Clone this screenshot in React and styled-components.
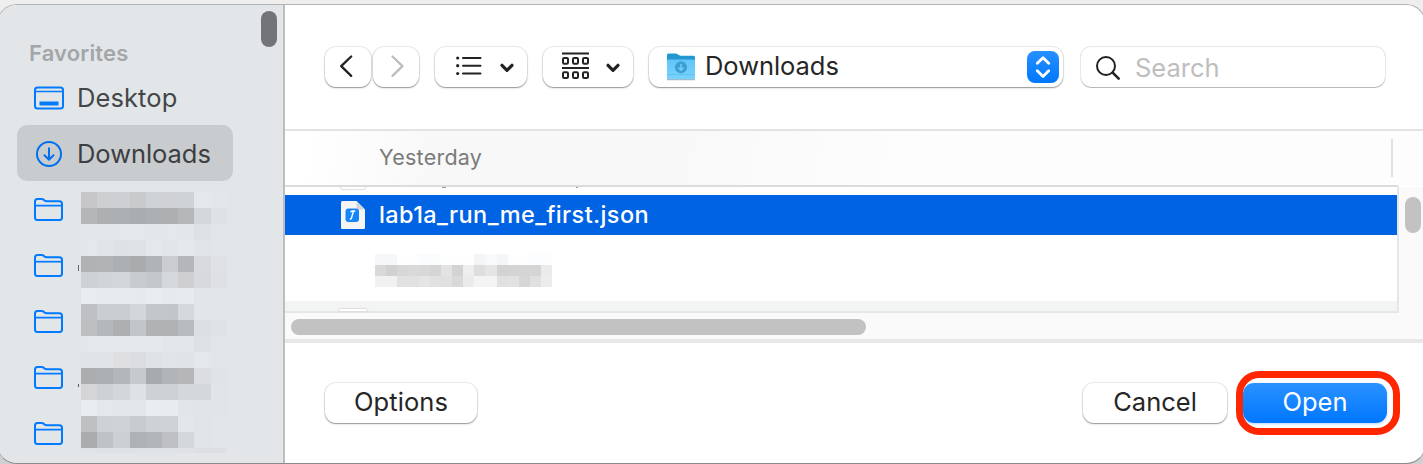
import React from "react";
import styled, { createGlobalStyle } from "styled-components";

const GlobalStyle = createGlobalStyle`
  *, *::before, *::after { box-sizing: border-box; }
  body {
    margin: 0;
    overflow: hidden;
    background: #ececec;
    font-family: Inter, "Liberation Sans", sans-serif;
    color: #262626;
  }
`;

const Desktop = styled.div`
  height: 464px;
  padding-top: 4px;
  overflow: hidden;
  background: linear-gradient(#eeeeee 0, #eeeeee 50%, #d0d0d0 50%);
`;

const Window = styled.div`
  display: flex;
  height: 460px;
  margin: 0 -3px;
  border: 1px solid #b4b4b4;
  border-bottom-color: #8c8c8c;
  border-radius: 20px;
  overflow: hidden;
  background: #fff;
`;

const Sidebar = styled.aside`
  display: flex;
  flex: none;
  width: 287px;
  padding-left: 2px;
  background: #e2e6e9;
  border-right: 2px solid #bcbdbf;
`;

const Places = styled.nav`
  flex: none;
  width: 257px;
  padding: 32px 20px 0 17px;
`;

const SectionTitle = styled.h2`
  margin: 0;
  padding-left: 12px;
  font-size: 22px;
  font-weight: 600;
  line-height: 32px;
  letter-spacing: 0.15px;
  color: #a3a6a9;
`;

const Place = styled.div`
  display: flex;
  align-items: center;
  width: 216px;
  height: 56px;
  padding: 2px 0 0 16px;
  border-radius: 10px;
  gap: 12px;
  background: ${(p) => (p.$selected ? "#c9cccf" : "transparent")};
`;

const Label = styled.span`
  font-size: ${(p) => p.$size || 25.5}px;
  line-height: 32px;
  white-space: nowrap;
  letter-spacing: ${(p) => p.$track || 0}px;
  color: ${(p) => p.$color || "#262626"};
  font-weight: ${(p) => p.$weight || 400};
`;

const Redacted = styled.div`
  display: flex;
  padding-left: 16px;
  gap: 14px;
`;

const FolderColumn = styled.div`
  display: grid;
  grid-auto-rows: 56px;
  align-items: center;
  width: 48px;
  height: 280px;
  padding-top: 1px;
`;

const RedactedPixels = styled.div`
  padding: 11px 0 0 3px;
  margin-left: -17px;
  background: linear-gradient(#66686a, #66686a) 0 84px / 1px 6px no-repeat,
    linear-gradient(#55575a, #55575a) 0 203px / 1px 3px no-repeat;
`;

const Mosaic = styled.div`
  flex: none;
  display: grid;
  grid-template-columns: repeat(${(p) => p.$cols}, ${(p) => p.$cell}px);
  grid-template-rows: ${(p) => p.$rows};
  align-content: start;
`;

const Cell = styled.i`
  background: ${(p) => p.$color};
`;

const SidebarThumb = styled.div`
  width: 16px;
  height: 36px;
  margin: 6px 0 0 4px;
  border-radius: 8px;
  background: #737477;
`;

const Main = styled.main`
  display: flex;
  flex-direction: column;
  flex: 1;
  min-width: 0;
  padding-right: 2px;
`;

const Toolbar = styled.header`
  display: flex;
  height: 124px;
  flex: none;
  padding: 42px 0 0 40px;
`;

const Control = styled.div`
  display: flex;
  align-items: center;
  flex: none;
  width: ${(p) => p.$width}px;
  height: 40px;
  margin-right: ${(p) => p.$gap || 0}px;
  border-radius: 11px;
  background: #fff;
  box-shadow: 0 0 0 1px rgba(0, 0, 0, 0.07), 0 1px 1px rgba(0, 0, 0, 0.28),
    0 1px 3px rgba(0, 0, 0, 0.12);
`;

const PathSelect = styled(Control)`
  padding: 0 4px 0 17px;
`;

const PathName = styled.div`
  flex: 1;
  padding-left: 9px;
  margin-top: -2px;
`;

const Stepper = styled.div`
  display: flex;
  width: 32px;
  height: 32px;
  border-radius: 8px;
  background: linear-gradient(#2690ff, #0077fd);
`;

const SearchField = styled(Control)`
  gap: 12px;
  padding: 1px 0 0 14px;
  border-radius: 10px;
  box-shadow: 0 0 0 1px rgba(0, 0, 0, 0.09), 0 1px 0 rgba(0, 0, 0, 0.2);
`;

const ListHeader = styled.div`
  display: flex;
  flex: none;
  justify-content: space-between;
  align-items: center;
  height: 56px;
  padding: 0 30px 0 94px;
  border-top: 2px solid #e3e3e3;
  background: linear-gradient(100deg, #fff 2%, #f7f8f7 14%, #f8f8f8 31%, #fdfdfd 56%);
`;

const ColumnTitle = styled.div`
  margin-top: -2px;
`;

const ColumnDivider = styled.div`
  width: 2px;
  height: 38px;
  background: #e2e2e2;
`;

const ListArea = styled.div`
  display: flex;
  flex: none;
  height: 128px;
  background: linear-gradient(#fff 2px, #fafafa 2px);
`;

const FileList = styled.div`
  width: 1114px;
  height: 128px;
  background: #fff;
  border: solid #e5e6e6;
  border-width: 0 2px 2px 0;
`;

const ScrolledRow = styled.div`
  display: flex;
  align-items: flex-start;
  height: 10px;
  border-top: 2px solid #dcdcdc;
  overflow: hidden;
`;

const Descender = styled.i`
  width: ${(p) => p.$width}px;
  height: 1px;
  margin-left: ${(p) => p.$left}px;
  background: #999;
`;

const FileRow = styled.div`
  display: flex;
  align-items: center;
  height: 40px;
  padding-left: 56px;
  gap: 14px;
  background: #0063e3;
`;

const HiddenRow = styled.div`
  height: 66px;
  padding: 19px 0 0 90px;
`;

const StripeRow = styled.div`
  height: 10px;
  padding: 8px 0 0 54px;
  background: #f3f5f5;
`;

const PageEdge = styled.div`
  flex: none;
  width: ${(p) => p.$width}px;
  height: 2px;
  margin-left: ${(p) => p.$left || 0}px;
  border-radius: ${(p) => (p.$bottom ? "0 0 5px 5px" : "5px 5px 0 0")};
  background: #fff;
  box-shadow: 0 0 1px 1px #dedede;
`;

const ListThumb = styled.div`
  width: 16px;
  height: 36px;
  margin: 12px 0 0 6px;
  border-radius: 8px;
  background: #c2c2c2;
`;

const HorizontalTrack = styled.div`
  flex: none;
  height: 30px;
  padding: 6px;
  background: #fafafa;
  border-bottom: 4px solid #e8e8e8;
`;

const HorizontalThumb = styled.div`
  width: 575px;
  height: 16px;
  border-radius: 8px;
  background: #c2c2c2;
`;

const Footer = styled.footer`
  display: flex;
  align-items: flex-start;
  justify-content: space-between;
  height: 119px;
  padding: 28px 23px 0 40px;
`;

const Actions = styled.div`
  display: flex;
`;

const PushButton = styled(Control).attrs({ as: "button" })`
  justify-content: center;
  margin-top: 12px;
  padding: 0 0 2px;
  border: 0;
  font-family: inherit;
`;

const Highlight = styled.div`
  width: 164px;
  height: 64px;
  margin-left: 9px;
  padding-top: 5px;
  border: 7px solid #ff2600;
  border-radius: 23px;
`;

const OpenButton = styled.button`
  display: flex;
  align-items: center;
  justify-content: center;
  width: 144px;
  height: 40px;
  padding: 0 0 2px;
  border: 0;
  border-radius: 11px;
  font-family: inherit;
  background: linear-gradient(#2a91ff, #0077ff);
  box-shadow: 0 1px 3px rgba(0, 110, 255, 0.3);
`;

const blue = "#007aff";

const DesktopIcon = () => (
  <svg width="32" height="26" viewBox="0 0 32 26" fill="none" stroke={blue} strokeWidth="2">
    <rect x="2" y="2.5" width="28" height="21" rx="2.5" />
    <path d="M2 6.5h28" strokeWidth="1.5" />
    <path d="M6.5 18.5h19" strokeWidth="4" />
  </svg>
);

const DownloadIcon = () => (
  <svg width="32" height="30" viewBox="0 0 32 30" fill="none" stroke="#0070f0" strokeWidth="2" strokeLinecap="round" strokeLinejoin="round">
    <circle cx="16" cy="15" r="12" />
    <path d="M16 9.3v11M11.5 16.3l4.5 4.5 4.5-4.5" />
  </svg>
);

const FolderIcon = () => (
  <svg width="32" height="26" viewBox="0 0 32 26" fill="none" stroke={blue} strokeWidth="2" strokeLinejoin="round">
    <path d="M2 20.5V4.500Q2 2 4.500 2H8.500Q10 2 11 3l.5.500Q12.300 4.200 13.500 4.200H26.500Q29 4.200 29 6.700V20.500Q29 23 26.500 23H4.500Q2 23 2 20.500Z" />
    <path d="M2 8.700h27" strokeWidth="1.700" />
  </svg>
);

const ChevronButtonIcon = ({ forward }) => (
  <svg width="46" height="40" fill="none" stroke={forward ? "#bdbdbd" : "#222"} strokeWidth="2.300" strokeLinecap="round" strokeLinejoin="round">
    <path d={forward ? "M19.500 9.500l10 9.700-10 9.700" : "M26.200 9.500l-10 9.700 10 9.700"} />
  </svg>
);

const ListViewIcon = () => (
  <svg width="92" height="40" fill="none" stroke="#222" strokeLinecap="round">
    <path d="M28 11h17.500M28 18.700h17.500M28 26.500h17.500" strokeWidth="2" />
    <path d="M22.700 11h.01M22.700 18.700h.01M22.700 26.500h.01" strokeWidth="3.200" />
    <path d="M67 18.300l5 5 5-5" strokeWidth="3.200" strokeLinejoin="round" />
  </svg>
);

const GroupViewIcon = () => (
  <svg width="90" height="40" fill="none" stroke="#222" strokeWidth="2">
    <path d="M19 6.400h27M19 20.900h27" />
    {[11, 25.300].map((y) =>
      [20, 30, 40].map((x) => <rect key={`${x}-${y}`} x={x} y={y} width="5" height="5.700" rx="1.200" />)
    )}
    <path d="M65 18.300l5 5 5-5" strokeWidth="3.200" strokeLinecap="round" strokeLinejoin="round" />
  </svg>
);

const BlueFolderIcon = () => (
  <svg width="30" height="30" viewBox="0 0 30 30">
    <defs>
      <linearGradient id="front" x1="0" y1="0" x2="0" y2="1">
        <stop offset="0" stopColor="#62c4f8" />
        <stop offset="1" stopColor="#79d3ff" />
      </linearGradient>
    </defs>
    <path d="M1 27.500h28" stroke="#a8b4bb" strokeWidth="1.500" />
    <path d="M1 3Q1 1.500 2.500 1.500H9.500Q11 1.500 12 2.600t2.500 1.100H27.500Q29 3.700 29 5.200V20H1Z" fill="#2397cf" />
    <path d="M1 8.500Q1 7.500 2 7.500H28Q29 7.500 29 8.500V26Q29 27.200 27.500 27.200H2.500Q1 27.200 1 26Z" fill="url(#front)" />
    <path d="M1 22.500h28" stroke="#60bce9" strokeWidth=".8" />
    <circle cx="15" cy="15.200" r="6" fill="#3a9fd3" />
    <path d="M15 12v6M12.300 15.500l2.700 2.700 2.700-2.700" stroke="#76ccf7" strokeWidth="1.500" fill="none" />
  </svg>
);

const StepperIcon = () => (
  <svg width="32" height="32" fill="none" stroke="#fff" strokeWidth="2.800" strokeLinecap="round" strokeLinejoin="round">
    <path d="M10.300 12.300L16 6.700l5.700 5.600M10.300 19.800l5.700 5.600 5.700-5.600" />
  </svg>
);

const SearchIcon = () => (
  <svg width="28" height="28" viewBox="0 0 28 28" fill="none" stroke="#222" strokeLinecap="round">
    <circle cx="11" cy="12" r="9" strokeWidth="2" />
    <path d="M17.700 18.700l6 6" strokeWidth="2.600" />
  </svg>
);

const JsonFileIcon = () => (
  <svg width="24" height="28" viewBox="0 0 24 28">
    <path d="M1.500 0H15.500L24 8.500V26.500Q24 28 22.500 28H1.500Q0 28 0 26.500V1.500Q0 0 1.500 0Z" fill="#f5f5f5" />
    <path d="M15.500 0V7Q15.500 8.500 17 8.500H24Z" fill="#d2d6db" />
    <rect x="4.500" y="7.500" width="13.500" height="13.500" rx="3" fill="#1685f8" />
    <path d="M9.500 11.200q.6-1.200 2.200-1.200h2.600M12.500 10l-2 7q-.4 1.200-1.700 1.300" stroke="#fff" strokeWidth="1.400" fill="none" />
  </svg>
);

const sidebarCells = `
c7c7c9 cdcfd1 cdcfd2 c9cacc d0d3d5 cfd1d4 d0d3d6 e5e8eb e4e7ea
b4b6b8 adafb1 adb0b2 a9adb0 adb0b2 aeafb1 b6b7b9 d5d8da dfe2e5
e4e7ea e4e7ea e5e8ea e5e8ea e4e7ea e5e8eb e4e7ea dfe2e5 e2e6e9
e5e8eb e2e5e8 dfe2e4 e0e3e6 e5e8eb e3e6e9 e6e9ec e2e5e8 e2e6e9
b0b2b4 b2b3b5 adb0b3 a9abad b1b4b7 cbcccf b5b6b9 d8dadd dfe2e4
cfd2d4 d2d5d7 d4d7d9 c9cccf c4c8cb d6d9dc cfcfd2 d7d9dc dee1e4
eaedf0 e8ebee e8ebee e7eaed eaedf0 e7eaed e8ebee e3e6e9 e2e6e9
bfc0c3 cbced1 cacdd0 d4d7da c3c7ca c3c6c9 d6d9dc e3e6e9 e2e6e9
bdbfc1 b4b8bb adafb1 c2c6c9 b1b2b4 b0b2b4 b8bcbe dce0e2 e0e3e6
e5e8eb e5e8eb e6e9ec e5e8eb e6e9ec e4e7ea e4e7ea dfe2e4 e2e6e9
e1e4e7 e1e4e7 dfdfe2 dbdee1 e0e3e6 e2e5e8 e1e4e7 e4e8eb e2e6e9
abadaf adb0b3 b3b7ba c6cacd a7abae b2b5b8 b6b6b8 dbdee1 e1e4e7
d5d5d8 cfd2d4 d4d7d9 dfe2e5 cfd2d4 cfd2d5 d5d8da d5d8da e1e4e8
e9edf0 e5e8eb e4e7ea e4e7ea eaedf0 e9ecef e3e6e9 e2e5e8 e1e5e9
bfc0c1 cfd2d4 d0d3d5 c9cccf cfd2d4 d0d3d6 e3e6ea e2e5e8 e2e6e9
abacae bfc3c6 cdd0d2 afb2b5 b2b6b9 bfc0c3 d5d8da e2e5e8 e2e6e9
e1e4e7 dfe2e5 dfe2e5 e0e3e6 e0e3e6 e0e3e6 dfe1e4 dedfe2 dedfe2`;

const fileCells = `
f6f7f9 f6f7f9 fefefe fefefe fbfcfe fbfcfe fefefe fefefe fefefe f4f5f7 f8f9fb f5f6f8 fefefe fefefe fcfdfe fcfdfe
d9d9d9 d1d1d1 d7d7d7 d9d9d9 d8d8d8 d5d5d5 e3e3e3 d3d3d3 eeeeee dedede e5e5e5 d3d3d3 d4d4d4 d5d5d5 d5d5d5 ebebeb
f1f1f1 f1f1f1 e1e1e1 e1e1e1 e5e5e5 e1e1e1 e0e0e0 d9d9d9 ebebeb f4f4f4 f4f4f4 e0e0e0 e2e2e2 d6d6d6 e0e0e0 ececec`;

const Pixels = ({ data, cols, cell, rows }) => (
  <Mosaic $cols={cols} $cell={cell} $rows={rows}>
    {data.trim().split(/\s+/).map((c, i) => (
      <Cell key={i} $color={`#${c}`} />
    ))}
  </Mosaic>
);

export default function App() {
  return (
    <Desktop>
      <GlobalStyle />
      <Window>
        <Sidebar>
          <Places>
            <SectionTitle>Favorites</SectionTitle>
            <Place>
              <DesktopIcon />
              <Label $color="#444648" $track={0.1}>Desktop</Label>
            </Place>
            <Place $selected>
              <DownloadIcon />
              <Label $color="#3c3e40" $track={-0.05}>Downloads</Label>
            </Place>
            <Redacted>
              <FolderColumn>
                {[0, 1, 2, 3, 4].map((i) => (
                  <FolderIcon key={i} />
                ))}
              </FolderColumn>
              <RedactedPixels>
                <Pixels data={sidebarCells} cols={9} cell={16.2} rows="repeat(16, 16px) 5px" />
              </RedactedPixels>
            </Redacted>
          </Places>
          <SidebarThumb />
        </Sidebar>
        <Main>
          <Toolbar>
            <Control $width={46} $gap={2}><ChevronButtonIcon /></Control>
            <Control $width={46} $gap={16}><ChevronButtonIcon forward /></Control>
            <Control $width={92} $gap={16}><ListViewIcon /></Control>
            <Control $width={90} $gap={16}><GroupViewIcon /></Control>
            <PathSelect $width={414} $gap={18}>
              <BlueFolderIcon />
              <PathName><Label $track={-0.05}>Downloads</Label></PathName>
              <Stepper><StepperIcon /></Stepper>
            </PathSelect>
            <SearchField $width={304}>
              <SearchIcon />
              <Label $color="#bebebe">Search</Label>
            </SearchField>
          </Toolbar>
          <ListHeader>
            <ColumnTitle>
              <Label $size={21.5} $color="#7b7b7b" $track={0.25}>Yesterday</Label>
            </ColumnTitle>
            <ColumnDivider />
          </ListHeader>
          <ListArea>
            <FileList>
              <ScrolledRow>
                <PageEdge $width={24} $left={56} $bottom />
                <Descender $width={4} $left={77} />
                <Descender $width={2} $left={130} />
              </ScrolledRow>
              <FileRow>
                <JsonFileIcon />
                <Label $size={23.5} $color="#fff" $weight={500} $track={0.39}>lab1a_run_me_first.json</Label>
              </FileRow>
              <HiddenRow>
                <Pixels data={fileCells} cols={16} cell={11.05} rows="repeat(3, 11px)" />
              </HiddenRow>
              <StripeRow><PageEdge $width={28} /></StripeRow>
            </FileList>
            <ListThumb />
          </ListArea>
          <HorizontalTrack><HorizontalThumb /></HorizontalTrack>
          <Footer>
            <PushButton $width={152}><Label $track={0.1}>Options</Label></PushButton>
            <Actions>
              <PushButton $width={144}><Label>Cancel</Label></PushButton>
              <Highlight>
                <OpenButton><Label $color="#fff">Open</Label></OpenButton>
              </Highlight>
            </Actions>
          </Footer>
        </Main>
      </Window>
    </Desktop>
  );
}
